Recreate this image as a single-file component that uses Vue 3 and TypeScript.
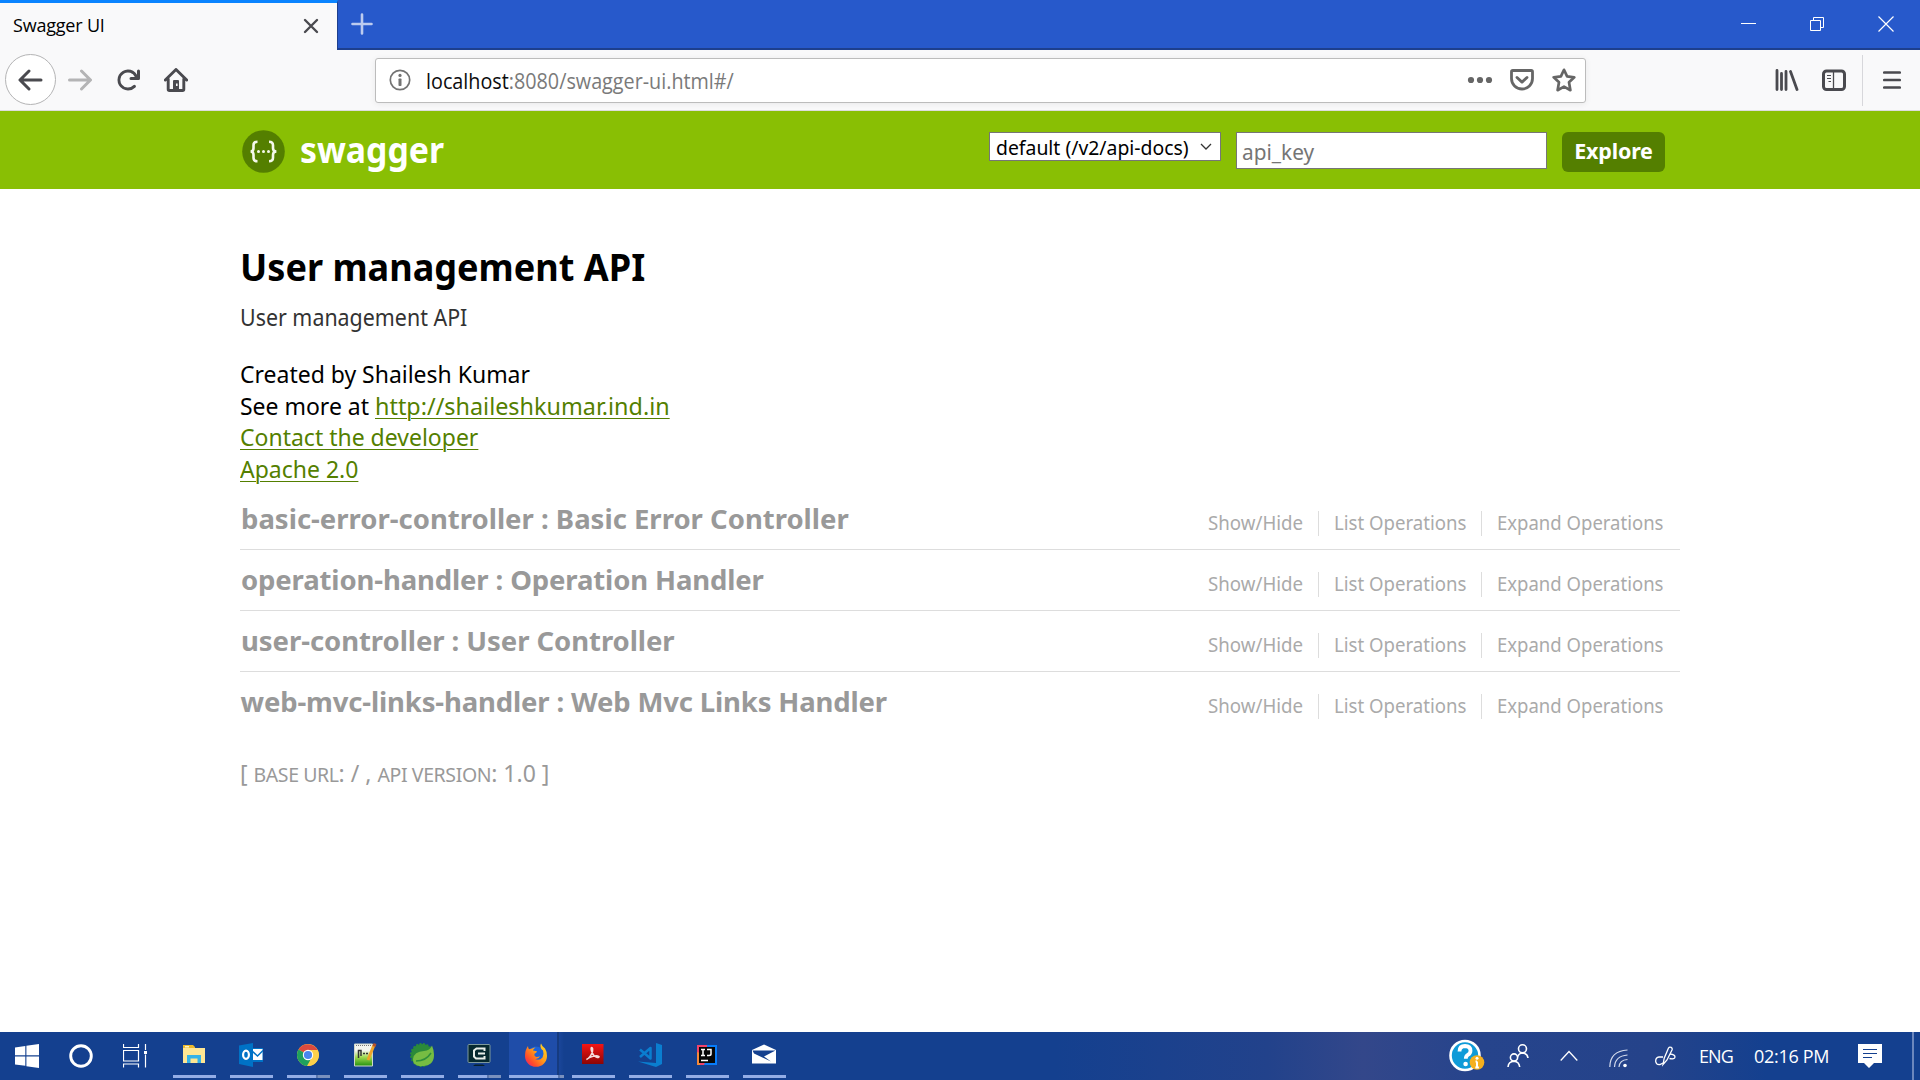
<script setup lang="ts">
interface Controller {
  name: string
  cls: string
}

const controllers: Controller[] = [
  { name: 'basic-error-controller : Basic Error Controller', cls: 'c1' },
  { name: 'operation-handler : Operation Handler', cls: 'c2' },
  { name: 'user-controller : User Controller', cls: 'c3' },
  { name: 'web-mvc-links-handler : Web Mvc Links Handler', cls: 'c4' },
]
</script>

<template>
  <div class="screen">
    <header class="tabs">
      <div class="tab">
        <span class="tab-title">Swagger UI</span>
        <svg class="tab-close" width="16" height="16" viewBox="0 0 16 16"><path d="M2 2l12 12M14 2L2 14" stroke="#4a4a4f" stroke-width="2.4" stroke-linecap="round" /></svg>
      </div>
      <svg class="plus" width="22" height="22" viewBox="0 0 22 22"><path d="M11 1.500v19M1.500 11h19" stroke="#bccbef" stroke-width="2.6" stroke-linecap="round" /></svg>
      <div class="win">
        <svg width="16" height="16" viewBox="0 0 16 16"><path d="M1 7.500h15" stroke="#fff" /></svg>
        <svg width="16" height="16" viewBox="0 0 16 16"><path d="M1.500 4.500h10v10h-10zM4.500 4v-2.500h10v10H12" fill="none" stroke="#fff" /></svg>
        <svg width="16" height="16" viewBox="0 0 16 16"><path d="M.5.5l15 15M15.500.5l-15 15" stroke="#fff" stroke-width="1.200" /></svg>
      </div>
    </header>

    <nav class="toolbar">
      <div class="back">
        <svg width="25" height="24" viewBox="0 0 16 16"><path fill="#4a4a4f" d="M15 7H3.414l4.293-4.293a1 1 0 0 0-1.414-1.414l-6 6a1 1 0 0 0 0 1.414l6 6a1 1 0 0 0 1.414-1.414L3.414 9H15a1 1 0 0 0 0-2z" /></svg>
      </div>
      <svg class="fwd" width="24" height="24" viewBox="0 0 16 16"><path fill="#b4b4b5" transform="matrix(-1 0 0 1 16 0)" d="M15 7H3.414l4.293-4.293a1 1 0 0 0-1.414-1.414l-6 6a1 1 0 0 0 0 1.414l6 6a1 1 0 0 0 1.414-1.414L3.414 9H15a1 1 0 0 0 0-2z" /></svg>
      <svg class="reload" width="24" height="24" viewBox="0 0 16 16"><path fill="#4a4a4f" d="M15 1a1 1 0 0 0-1 1v2.418A6.995 6.995 0 1 0 8 15a6.954 6.954 0 0 0 4.950-2.050 1 1 0 0 0-1.414-1.414A5.019 5.019 0 1 1 12.549 6H10a1 1 0 0 0 0 2h5a1 1 0 0 0 1-1V2a1 1 0 0 0-1-1z" /></svg>
      <svg class="home" width="24" height="24" viewBox="0 0 24 24"><path d="M1.300 12L12 1.500 22.700 12M4.200 11v10.300q0 1.200 1.200 1.200h13.200q1.200 0 1.200-1.200V11" fill="none" stroke="#4a4a4f" stroke-width="2.900" stroke-linecap="round" stroke-linejoin="round" /><path d="M9 22v-9q0-1 1-1h4q1 0 1 1v9z" fill="#4a4a4f" /><rect x="12" y="15.500" width="1.600" height="2.500" fill="#f9f9fa" /></svg>
      <div class="url">
        <svg class="info" width="22" height="22" viewBox="0 0 22 22"><circle cx="11" cy="11" r="9.700" fill="none" stroke="#737373" stroke-width="1.700" /><circle cx="11" cy="6.400" r="1.600" fill="#737373" /><rect x="9.500" y="9.500" width="3" height="7.500" rx=".8" fill="#737373" /></svg>
        <span class="url-text"><b>localhost</b>:8080/swagger-ui.html#/</span>
        <svg class="dots" width="26" height="24" viewBox="0 0 26 24"><g fill="#666"><circle cx="4" cy="12" r="3.100" /><circle cx="13" cy="12" r="3.100" /><circle cx="22" cy="12" r="3.100" /></g></svg>
        <svg class="pocket" width="24" height="24" viewBox="0 0 24 24"><path d="M2.800 2.500h18.400q1.300 0 1.300 1.300V10.500a10.500 10.500 0 0 1-21 0V3.800q0-1.300 1.300-1.300z" fill="none" stroke="#666" stroke-width="2.800" /><path d="M7 9.500l5 4.600 5-4.600" fill="none" stroke="#666" stroke-width="2.800" stroke-linecap="round" stroke-linejoin="round" /></svg>
        <svg class="star" width="24" height="24" viewBox="0 0 24 24"><path d="M12 1.800l3.100 6.600 7.200.9-5.300 5 1.400 7.900L12 18.600l-6.400 3.600L7 14.300l-5.300-5 7.200-.9z" fill="none" stroke="#666" stroke-width="2.700" stroke-linejoin="round" /></svg>
      </div>
      <svg class="lib" width="24" height="24" viewBox="0 0 24 24"><path d="M2 2.500v19M6.500 5.500v16M11 3.500v18M15.500 3.500l6.500 18" stroke="#4a4a4f" stroke-width="2.800" stroke-linecap="round" /></svg>
      <svg class="side" width="24" height="24" viewBox="0 0 24 24"><rect x="1.500" y="3" width="21" height="18.500" rx="3" fill="none" stroke="#4a4a4f" stroke-width="3" /><path d="M11.500 3v18" stroke="#4a4a4f" stroke-width="1.300" /><path d="M5 7.500h4M5 10.500h4M6.500 13.500H9" stroke="#4a4a4f" stroke-width="1.200" /></svg>
      <i class="vsep"></i>
      <svg class="menu" width="18" height="20" viewBox="0 0 18 20"><path d="M1.300 2.500h15.400M1.300 10h15.400M1.300 17.500h15.400" stroke="#4a4a4f" stroke-width="2.700" stroke-linecap="round" /></svg>
    </nav>

    <div class="brand">
      <svg class="logo" width="43" height="43" viewBox="0 0 43 43"><circle cx="21.500" cy="21.500" r="21.300" fill="#547f00" /><g fill="none" stroke="#f4f8ea" stroke-width="2.600"><path d="M15.500 11.700q-4 0-4 3.500v3q0 3-2.800 3.300 2.800.3 2.800 3.300v3q0 3.500 4 3.500" /><path d="M27 11.700q4 0 4 3.500v3q0 3 3.300 3.300-3.300.3-3.300 3.300v3q0 3.500-4 3.500" /></g><g fill="#f4f8ea"><circle cx="16.500" cy="21.500" r="1.500" /><circle cx="21.500" cy="21.500" r="1.500" /><circle cx="26.500" cy="21.500" r="1.500" /></g></svg>
      <span class="brand-name">swagger</span>
      <div class="select"><span class="sel">default (/v2/api-docs)</span><svg width="12" height="8" viewBox="0 0 12 8"><path d="M1 1l5 5 5-5" fill="none" stroke="#333" stroke-width="1.300" /></svg></div>
      <div class="key"><span class="key-hint">api_key</span></div>
      <div class="explore">Explore</div>
    </div>

    <main>
      <h1>User management API</h1>
      <p class="desc">User management API</p>
      <div class="meta">
        <div class="m1">Created by Shailesh Kumar</div>
        <div class="m2"><span>See more at </span><a>http://shaileshkumar.ind.in</a></div>
        <div class="m3"><a>Contact the developer</a></div>
        <div class="m3"><a>Apache 2.0</a></div>
      </div>
      <div v-for="c in controllers" :key="c.name" class="row">
        <h2 :class="c.cls">{{ c.name }}</h2>
        <div class="ops">
          <div class="op toggle"><span>Show/Hide</span></div>
          <div class="op list"><span>List Operations</span></div>
          <div class="op expand"><span>Expand Operations</span></div>
        </div>
      </div>
      <p class="foot">[ <small class="f1">BASE URL</small>: / , <small class="f2">API VERSION</small>: 1.0 ]</p>
    </main>

    <footer class="taskbar">
      <div class="sys"><svg width="24" height="24" viewBox="0 0 24 24"><path fill="#fff" d="M0 3.400L10.300 2v9.300H0zM11.400 1.800L24 0v11.300H11.400zM0 12.500h10.300v9.300L0 20.400zM11.400 12.500H24V24l-12.600-1.800z" /></svg></div>
      <div class="sys"><svg width="24" height="24" viewBox="0 0 24 24"><circle cx="12" cy="12" r="10.300" fill="none" stroke="#fff" stroke-width="2.900" /></svg></div>
      <div class="sys"><svg width="24" height="24" viewBox="0 0 24 24"><path d="M.5 0v3.500h15V0M.5 23.500v-3.500h15v3.500M.5 6.500h15v10.500H.5zM22.500 0v6M22.500 10.500v13" fill="none" stroke="#fff" stroke-width="1.200" /><path d="M21 7h3v3h-3z" fill="#fff" /></svg></div>

      <div class="apps">
        <div class="app">
          <svg viewBox="0 0 24 24"><path d="M1 2h10l2 2v4H1z" fill="#ecb92e" /><path d="M1 5h22v15H1z" fill="#ffe693" /><path d="M3 3h4v1.500H3z" fill="#fff2c0" /><path d="M5 12h14v8h-3.500v-4.500h-7V20H5z" fill="#35b3e8" /></svg>
        </div>
        <div class="app">
          <svg viewBox="0 0 24 24"><path d="M13 5h11v14H13z" fill="#0072c6" /><path d="M14 6h9.500v11H14z" fill="#fff" /><path d="M13 8l5.500 5L24 7.500" fill="none" stroke="#0072c6" stroke-width="1.500" /><path d="M0 2.500L14 0v24L0 21z" fill="#0072c6" /><ellipse cx="7" cy="11.800" rx="2.900" ry="4.100" fill="none" stroke="#fff" stroke-width="2.200" /></svg>
        </div>
        <div class="app multi">
          <svg viewBox="0 0 24 24"><circle cx="12" cy="12" r="11" fill="#fcd04b" /><path d="M12 12L2.500 6.500A11 11 0 0 1 21.600 7H12z" fill="#dc4a3d" /><path d="M12 12L2.500 6.500A11 11 0 0 0 11 23l5-9z" fill="#1fa15d" /><path d="M12 7h9.600A11 11 0 0 1 11.500 23l4.800-8.500z" fill="#fcd04b" /><circle cx="12" cy="12" r="5.200" fill="#fff" /><circle cx="12" cy="12" r="4.100" fill="#4a86ee" /></svg>
        </div>
        <div class="app">
          <svg viewBox="0 0 24 24"><defs><linearGradient id="np" x2="0" y2="1"><stop offset=".3" stop-color="#f3f5ee" /><stop offset=".6" stop-color="#9ed94e" /><stop offset="1" stop-color="#23900f" /></linearGradient></defs><path d="M1.500 1h18v22h-18z" fill="url(#np)" stroke="#cfd6c9" /><path d="M3 2.500h15" stroke="#777" stroke-dasharray="1 1" /><path d="M5.500 15V7.500h2.500V13M10 10.500h2M13 10.500h2" fill="none" stroke="#333" stroke-width="1.500" /><path d="M21 2l-6 15" stroke="#eda52b" stroke-width="3" /><path d="M22 .5l-1 3" stroke="#b5522d" stroke-width="3" /></svg>
        </div>
        <div class="app">
          <svg viewBox="0 0 24 24"><circle cx="12" cy="12" r="11" fill="#2b8a3a" stroke="#2b8a3a" stroke-width="2" stroke-dasharray="2 1.500" /><path d="M22 2.500q-2 5-8 5.500-10 .5-11 8-.5 6 7 7.300Q24 23.500 24 12q0-5-2-9.500z" fill="#76bc43" /><path d="M6 18q10 0 15-8" fill="none" stroke="#2f8f3b" stroke-width="1.500" /></svg>
        </div>
        <div class="app multi">
          <svg viewBox="0 0 24 24"><rect x="1" y="1.500" width="22" height="18" rx="1" fill="#06292f" stroke="#7e9a9c" /><path d="M17.500 8V5.500h-8L7 7.500v6l2 2h8.500V13M11 10.500h7" fill="none" stroke="#e8eee9" stroke-width="2" /><path d="M8 21.500h8l2 1.500H6z" fill="#06202c" /></svg>
        </div>
        <div class="app active">
          <svg viewBox="0 0 24 24"><defs><linearGradient id="ffx" x1="1" x2="0" y2="1"><stop offset="0" stop-color="#ffe226" /><stop offset=".45" stop-color="#ff9a1a" /><stop offset=".75" stop-color="#ff4a2b" /><stop offset="1" stop-color="#e0158c" /></linearGradient></defs><circle cx="12" cy="11.500" r="8" fill="#1c62d8" /><path d="M4 3q0 2 1 3.300L8 5.500q2-1 3.500-1Q9 6 9 7.500l4 .8q-.3 1.500-2.500 2.500-.5 2.700 2 3.200 2 0 3.500-.7-1.500 3.200-5 2.700 4.500 2 7.500-1.500 1.800-3 .5-7-3-2-2.500-5.500L17 .5q1 3 4 5 2 3 2 7.500a11 10.800 0 0 1-22 0Q1 7 4 3z" fill="url(#ffx)" /></svg>
        </div>
        <div class="app">
          <svg viewBox="0 0 24 24"><defs><linearGradient id="pdf" x2="0" y2="1"><stop offset="0" stop-color="#f51414" /><stop offset="1" stop-color="#8c0505" /></linearGradient></defs><path d="M1 1h21.500v20H1z" fill="url(#pdf)" /><path d="M5.500 16.500q4-2 6-8 .5-4-.8-4-1.200.3 0 4 2.500 5.500 5.500 6 2 0 1.800-1-2-1.500-6-.3-4 1-6.500 3.300z" fill="none" stroke="#f6dada" stroke-width="1.500" /></svg>
        </div>
        <div class="app">
          <svg viewBox="0 0 24 24"><path d="M18 0l6 2v19l-6 3L0 18.500l18 1.500z" fill="#0a7ed0" /><path d="M2 6.500l10.500 9V5L2 14" fill="none" stroke="#0a7ed0" stroke-width="2.500" stroke-linejoin="round" /></svg>
        </div>
        <div class="app">
          <svg viewBox="0 0 24 24"><path d="M2 2h20v20H2z" fill="#087cfa" /><path d="M2 2h10v12L9 22H2z" fill="#f0436b" /><path d="M2 9l3 1v12H2z" fill="#f68a3a" /><path d="M4 4h16v16H4z" fill="#070707" /><path d="M6 6.500h4M8 6.500v6M6 12.500h4M12 6.500h4v4.500q0 1.500-2 1.500h-2M6 17.500h7" fill="none" stroke="#fff" stroke-width="1.500" /></svg>
        </div>
        <div class="app">
          <svg viewBox="0 0 24 24"><path d="M0 7l12-5.500L24 7v13.500H0z" fill="#fff" /><path d="M.5 7.500h23L12 13.500l7 5-17-8z" fill="#14408f" /></svg>
        </div>
      </div>

      <div class="tray">
        <svg class="help" width="36" height="34" viewBox="0 0 36 34"><circle cx="16" cy="16.500" r="14.500" fill="#0f9bd8" stroke="#fff" stroke-width="2.600" /><path d="M10.500 12.500q0-5.500 5.500-5.500 5.500.2 5.500 4.700 0 2.600-2.700 4.200-2 1.200-2 3.900" fill="none" stroke="#fff" stroke-width="3.800" /><circle cx="16.600" cy="25" r="2.300" fill="#fff" /><circle cx="28" cy="23.500" r="7.300" fill="#f5b01e" /><path d="M28 22.500v6M26.500 22.500H28M26.300 28.500h3.600" stroke="#fff" stroke-width="2" /><circle cx="28" cy="19.300" r="1.500" fill="#fff" /></svg>
        <svg class="people" width="22" height="24" viewBox="0 0 22 24"><g fill="none" stroke="#fff" stroke-width="1.600"><circle cx="15.500" cy="4.800" r="4" /><path d="M10.500 13q1.500-4 5-4 5 .3 5.500 5" /><circle cx="7" cy="13.500" r="3.600" /><path d="M1 23q.5-5.500 6-5.700 5 .2 5.700 5.700" /></g></svg>
        <svg class="chev" width="18" height="12" viewBox="0 0 18 12"><path d="M.7 10.500L9 1.500l8.300 9" fill="none" stroke="#fff" stroke-width="1.300" /></svg>
        <svg class="wifi" width="19" height="19" viewBox="0 0 19 19"><g fill="none" stroke="#d5dced" stroke-width="1.200"><path d="M.8 18Q1 2 18.500 1" /><path d="M5.500 18Q6 7 18.500 6" /><path d="M10 18q.5-7 8.500-7.500" /></g><circle cx="16" cy="16.500" r="1.800" fill="#fff" /></svg>
        <svg class="pen" width="21" height="21" viewBox="0 0 21 21"><g fill="none" stroke="#fff" stroke-width="1.300"><path d="M8 18.500l1.200-6.300L13.500 2q1-1.500 2.700-.6 1.500 1 .8 2.600L12 14z" /><path d="M8 11H4q-3.500.5-3.300 4.500Q1.200 19 5 18.500l3-1.500" /><path d="M15 8q5 .5 5 3-.3 2.500-5.500 1.500" /></g></svg>
        <span class="lang">ENG</span>
        <span class="clock">02:16 PM</span>
        <svg class="action" width="24" height="24" viewBox="0 0 24 24"><path d="M0 0h24v19H16l-5 5-5-5H0z" fill="#fff" /><path d="M5 5.500h14M5 9.500h14M5 13.500h9" stroke="#14408f" stroke-width="1.200" /></svg>
        <i class="peek"></i>
      </div>
    </footer>
  </div>
</template>

<style>
body { margin: 0; overflow: hidden; }
</style>
<style scoped>
.screen { width: 1920px; height: 1080px; display: flex; flex-direction: column; background: #fff; font-family: "Noto Sans", sans-serif; color: #000; white-space: nowrap; }
.tabs { height: 48px; background: #2759cb; border-bottom: 2px solid #1d3f8e; display: flex; }
.tab { width: 324px; height: 47px; padding-left: 13px; border-top: 3px solid #0a84ff; background: #f9f9fa; border-right: 1px solid #1d3f8e; display: flex; align-items: center; }
.tab-title { font: 18px/46px "Open Sans", sans-serif; letter-spacing: -.2px; margin-bottom: 3px; }
.tab-close { margin: 0 18px 1px auto; }
.plus { margin: 13px 0 0 13px; }
.win { margin: 16px 26px 0 auto; display: flex; gap: 53px; }
.toolbar { height: 60px; border-bottom: 1px solid #dcdcdd; background: #f9f9fa; display: flex; align-items: center; }
.back { width: 49px; height: 49px; border: 1px solid #b4b4b5; border-radius: 50%; background: #fff; margin: 0 0 1px 5px; display: flex; align-items: center; justify-content: center; }
.fwd { margin-left: 12px; }
.reload { margin-left: 24px; }
.home { margin-left: 24px; }
.url { width: 1209px; height: 43px; margin: 0 0 0 187px; border: 1px solid #bcbcbc; border-radius: 3px; background: #fff; display: flex; align-items: center; box-shadow: 0 1px 6px rgba(0,0,0,.07); }
.info { margin-left: 13px; }
.url-text { margin: 1px 0 0 14.500px; font: 21px/42px "Open Sans", sans-serif; transform: scaleX(.941); transform-origin: 0 0; color: #7a7a7a; }
.url-text b { font-weight: 400; color: #0c0c0d; }
.dots { margin-left: auto; }
.pocket { margin-left: 17px; }
.star { margin: 0 9px 0 18px; }
.lib { margin-left: 189px; }
.side { margin-left: 23px; }
.vsep { width: 1px; height: 51px; background: #d7d7db; margin-left: 16px; }
.menu { margin-left: 20px; }
.brand { height: 78px; background: #89bf04; display: flex; align-items: flex-start; padding-left: 242px; }
.logo { margin-top: 19px; }
.brand-name { width: 144px; margin-left: 15px; font-weight: 700; font-size: 36px; line-height: 78px; transform: scaleX(.938); transform-origin: 0 0; color: #fff; }
.select { box-sizing: border-box; width: 232px; height: 29px; margin: 21px 0 0 545px; border: 1px solid #767676; background: #fff; display: flex; }
.select svg { margin: 10px 8px 0 auto; }
.sel { width: 193px; margin-left: 6px; font-size: 20px; line-height: 29px; transform: scaleX(.969); transform-origin: 0 0; }
.key { box-sizing: border-box; width: 311px; height: 37px; margin: 21px 0 0 15px; border: 1px solid #767676; background: #fff; }
.key-hint { display: inline-block; margin-left: 5px; font-size: 22px; line-height: 37px; transform: scaleX(.945); transform-origin: 0 0; color: #757575; }
.explore { width: 103px; height: 40px; margin: 21px 0 0 15px; border-radius: 6px; background: #547f00; text-align: center; font-weight: 700; font-size: 21.500px; line-height: 38px; letter-spacing: -.2px; color: #fff; }
main { margin-left: 240px; width: 1440px; flex: 1; }
h1, h2, p { margin: 0; }
h1, .desc, .m1, .m3, .m2 span, .m2 a { transform-origin: 0 0; }
h1 { margin-top: 53px; font-size: 37.500px; line-height: 50px; transform: scaleX(.962); }
.desc { margin-top: 10px; font-size: 23.200px; line-height: 30px; transform: scaleX(.923); color: #333; }
.meta { margin-top: 26px; font-size: 24px; line-height: 31.600px; }
.m1 { transform: scaleX(.957); }
.m2 { display: flex; }
.m2 span { width: 135px; white-space: pre; transform: scaleX(.957); }
.m2 a { transform: scaleX(.974); }
.m3 { transform: scaleX(.958); }
a { color: #547f00; text-decoration: underline; text-decoration-thickness: 1px; text-underline-offset: 3px; }
.row { display: flex; justify-content: space-between; height: 60px; border-bottom: 1px solid #ddd; }
.meta + .row { margin-top: 4.600px; }
.row:nth-last-child(2) { border-color: transparent; }
h2 { padding-left: 1px; font-size: 27.500px; line-height: 59px; color: #999; }
.c2 { letter-spacing: -.130px; }
.c3 { letter-spacing: -.060px; }
.c4 { letter-spacing: -.150px; padding-left: .5px; }
.ops { display: flex; margin-top: 22px; height: 25px; font-size: 20px; line-height: 24.500px; color: #aaa; }
.op { padding: 0 15px; border-right: 1px solid #ddd; }
.op span { display: inline-block; transform-origin: 0 0; }
.toggle { width: 95px; }
.toggle span { transform: scaleX(.935); }
.list { width: 132px; }
.list span { transform: scaleX(.93); }
.expand { width: 166.500px; border: 0; padding-right: 16.500px; }
.expand span { transform: scaleX(.926); }
.foot { margin-top: 25px; font-size: 23px; line-height: 30px; color: #999; }
.foot small { font-size: 19.500px; }
.f1 { letter-spacing: -.420px; }
.f2 { letter-spacing: -.380px; }
.taskbar { height: 48px; background: linear-gradient(90deg, #14408f 0, #14408f 55%, #22428b 66%, #33478a 71%, #26448c 77%, #25438a 86%, #14408f 92%); color: #fff; display: flex; }
.sys { width: 54px; display: flex; align-items: center; justify-content: center; }
.apps { display: flex; margin-left: 4px; }
.app { box-sizing: border-box; width: 43px; height: 46px; margin: 0 7px; border-bottom: 3px solid #93ade6; padding: 11px 0 0 9px; }
.app svg { width: 24px; height: 24px; display: block; }
.app.multi { border-image: linear-gradient(90deg, #93ade6 29px, #5c77ad 29px, #5c77ad 31px, #7990bd 31px) 1; border-image-width: 0 0 3px 0; }
.app.active { width: 55px; margin: 0 0 0 1px; padding-left: 15px; background: linear-gradient(90deg, #1f4da9 48px, #163b80 48px, #163b80 50px, #1a469a 50px, #14408f); border-image: linear-gradient(90deg, #93ade6 48px, #5c77ad 48px, #5c77ad 50px, #7990bd 50px) 1; border-image-width: 0 0 3px 0; }
.active + .app { margin-left: 8px; }
.tray { margin-left: auto; display: flex; align-items: center; }
.people { margin-left: 22px; }
.chev { margin-left: 31px; }
.wifi { margin: 5px 0 0 31px; }
.pen { margin-left: 27px; }
.lang, .clock { font: 18px/50px "Open Sans", sans-serif; }
.lang { width: 35px; margin-left: 23px; letter-spacing: -.9px; }
.clock { width: 75px; margin-left: 20px; letter-spacing: -.3px; }
.action { margin-left: 29px; }
.peek { width: 2px; height: 48px; margin: 0 6px 0 30px; background: #6c87bd; }
</style>
